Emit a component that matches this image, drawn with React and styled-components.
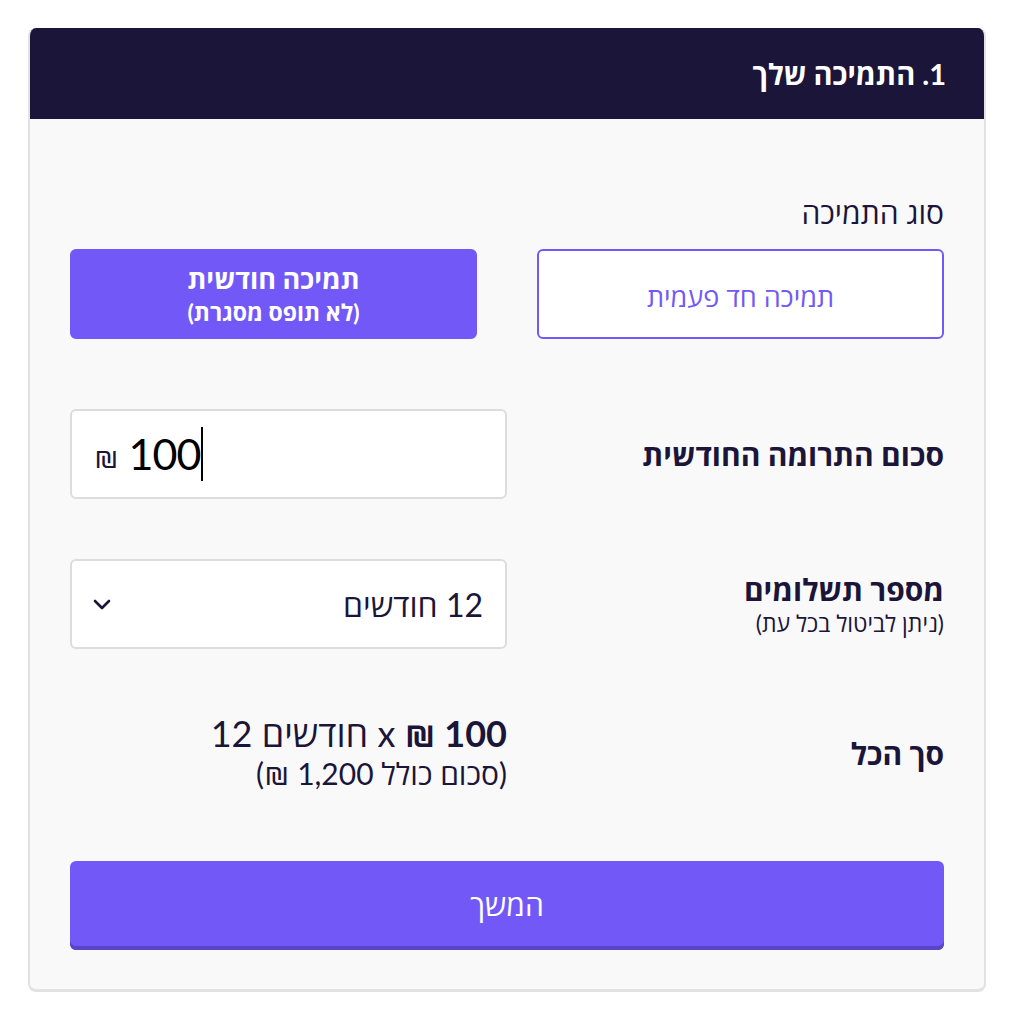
import React from "react";
import styled, { createGlobalStyle } from "styled-components";

const Global = createGlobalStyle`
  html, body { margin: 0; padding: 0; background: #ffffff; }
  body { font-family: Lato, "Open Sans", "Liberation Sans", sans-serif; color: #1b1539; }
  * { box-sizing: border-box; }
`;

const Page = styled.div`
  padding: 28px 24px 24px 28px;
  direction: rtl;
`;

const Card = styled.section`
  width: 958px;
  border: 2px solid #e2e2e2;
  border-top: none;
  border-bottom-width: 3px;
  border-radius: 8px;
  background: #f9f9f9;
  overflow: hidden;
`;

const Header = styled.header`
  height: 91px;
  background: #1b1539;
  color: #ffffff;
  display: flex;
  align-items: center;
  padding: 0 40px;
  margin: 0 -2px;
  font-size: 29px;
  font-weight: 700;
`;

const Body = styled.div`
  padding: 73px 40px 39px;
  display: flex;
  flex-direction: column;
`;

const SectionLabel = styled.div`
  font-size: 30px;
  line-height: 40px;
  margin-bottom: 17px;
`;

const TypeRow = styled.div`
  display: flex;
  justify-content: space-between;
  margin-bottom: 70px;
`;

const TypeButton = styled.button`
  width: 407px;
  height: 90px;
  border-radius: 6px;
  border: 2px solid #7259f7;
  background: ${(p) => (p.$active ? "#7259f7" : "#ffffff")};
  color: ${(p) => (p.$active ? "#ffffff" : "#7259f7")};
  font-family: inherit;
  font-size: 27px;
  font-weight: ${(p) => (p.$active ? 700 : 400)};
  line-height: 34px;
  display: flex;
  flex-direction: column;
  align-items: center;
  justify-content: center;
  padding: ${(p) => (p.$active ? "2px 0 0" : "6px 0 0")};
`;

const SubLine = styled.span`
  font-size: 23px;
  line-height: 32px;
`;

const FieldRow = styled.div`
  display: flex;
  align-items: center;
  justify-content: space-between;
  margin-bottom: ${(p) => p.$mb}px;
`;

const FieldLabel = styled.div`
  display: flex;
  flex-direction: column;
  font-size: 30px;
  font-weight: 700;
  line-height: 38px;
`;

const FieldHint = styled.span`
  font-size: 23px;
  font-weight: 400;
  line-height: 30px;
`;

const Box = styled.div`
  width: 437px;
  height: 90px;
  background: #ffffff;
  border: 2px solid #dcdcdc;
  border-radius: 6px;
  display: flex;
  align-items: center;
  direction: ltr;
  padding: 0 22px;
`;

const Currency = styled.span`
  font-size: 29px;
  color: #1b1539;
  margin-right: 10px;
  margin-top: 4px;
`;

const Amount = styled.span`
  font-size: 43px;
  color: #000000;
  letter-spacing: -1px;
  border-right: 2px solid #000000;
  line-height: 54px;
  padding-right: 1px;
`;

const SelectBox = styled(Box)`
  justify-content: space-between;
  padding: 0 22px 0 20px;
`;

const SelectText = styled.span`
  font-size: 32px;
  direction: rtl;
`;

const TotalValue = styled.div`
  width: 437px;
  display: flex;
  flex-direction: column;
  align-items: flex-start;
`;

const TotalMain = styled.div`
  font-size: 36px;
  line-height: 40px;
`;

const Strong = styled.strong`
  font-weight: 700;
`;

const TotalSub = styled.div`
  font-size: 30px;
  line-height: 40px;
`;

const Continue = styled.button`
  width: 100%;
  height: 89px;
  border: none;
  border-radius: 6px;
  background: #7259f7;
  box-shadow: inset 0 -4px 0 #5a45c8;
  color: #ffffff;
  font-family: inherit;
  font-size: 30px;
  padding-bottom: 4px;
`;

const Chevron = () => (
  <svg width="20" height="13" viewBox="0 0 20 13" fill="none">
    <path d="M3 3l7 7 7-7" stroke="#1b1539" strokeWidth="2.6" strokeLinecap="round" strokeLinejoin="round" />
  </svg>
);

export default function App() {
  return (
    <>
      <Global />
      <Page>
        <Card>
          <Header>1. התמיכה שלך</Header>
          <Body>
            <SectionLabel>סוג התמיכה</SectionLabel>
            <TypeRow>
              <TypeButton>תמיכה חד פעמית</TypeButton>
              <TypeButton $active>
                תמיכה חודשית
                <SubLine>(לא תופס מסגרת)</SubLine>
              </TypeButton>
            </TypeRow>
            <FieldRow $mb={60}>
              <FieldLabel>סכום התרומה החודשית</FieldLabel>
              <Box>
                <Currency>₪</Currency>
                <Amount>100</Amount>
              </Box>
            </FieldRow>
            <FieldRow $mb={64}>
              <FieldLabel>
                מספר תשלומים
                <FieldHint>(ניתן לביטול בכל עת)</FieldHint>
              </FieldLabel>
              <SelectBox>
                <Chevron />
                <SelectText>12 חודשים</SelectText>
              </SelectBox>
            </FieldRow>
            <FieldRow $mb={68}>
              <FieldLabel>סך הכל</FieldLabel>
              <TotalValue>
                <TotalMain>
                  <Strong>100 ₪</Strong> x חודשים 12
                </TotalMain>
                <TotalSub>(סכום כולל 1,200 ₪)</TotalSub>
              </TotalValue>
            </FieldRow>
            <Continue>המשך</Continue>
          </Body>
        </Card>
      </Page>
    </>
  );
}
